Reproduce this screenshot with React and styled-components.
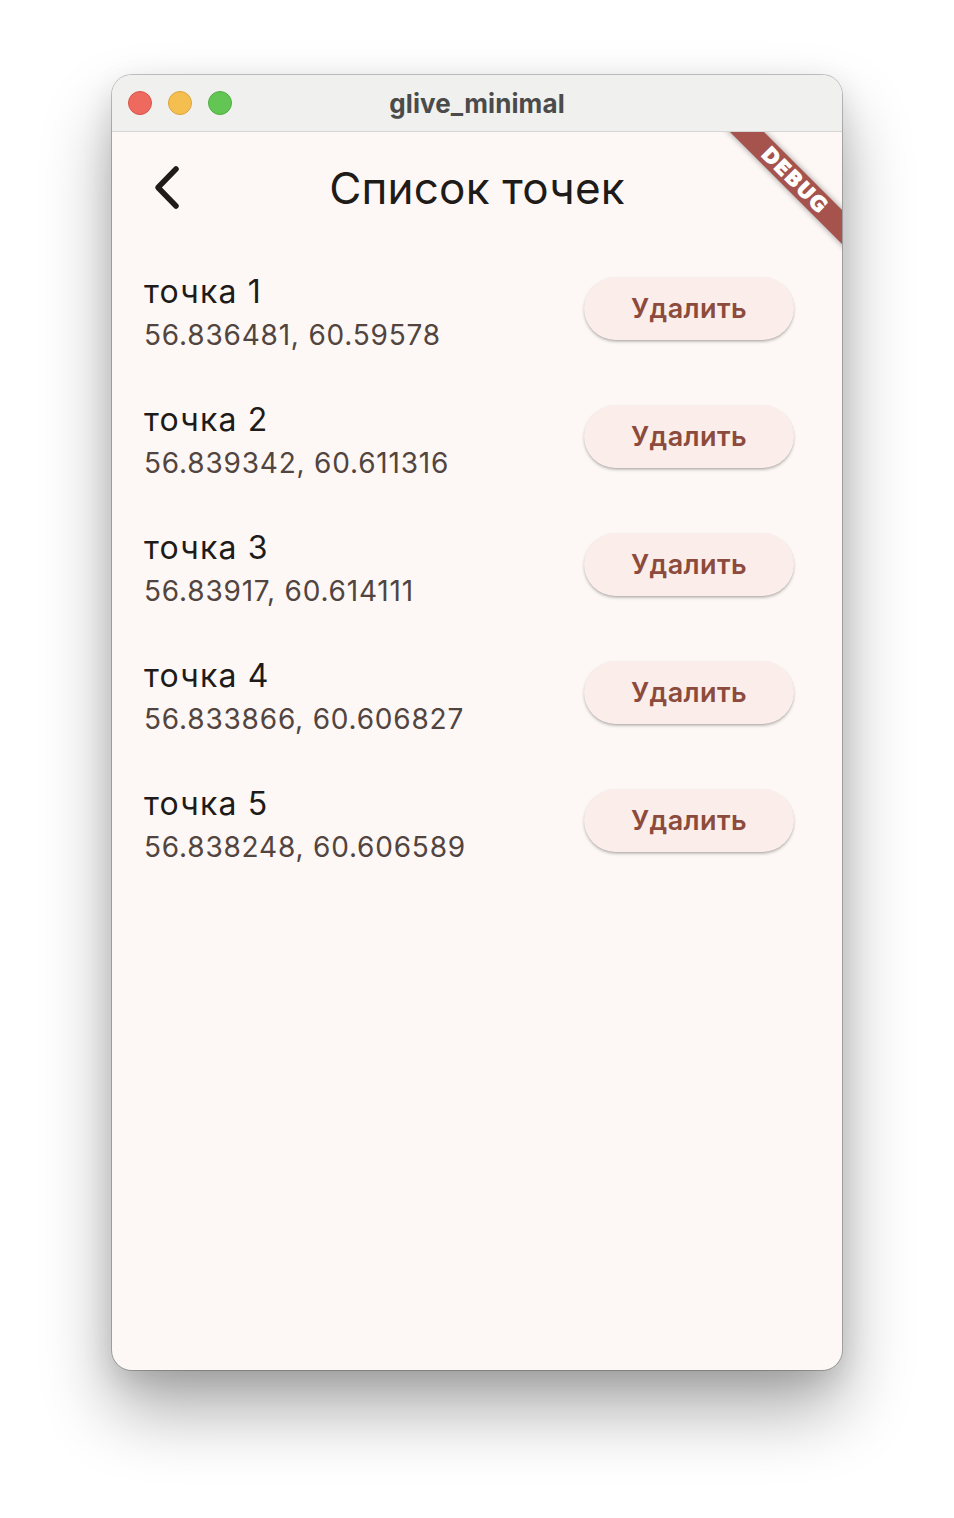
import React from "react";
import styled, { createGlobalStyle } from "styled-components";

const POINTS = [
  { name: "точка 1", coords: "56.836481, 60.59578" },
  { name: "точка 2", coords: "56.839342, 60.611316" },
  { name: "точка 3", coords: "56.83917, 60.614111" },
  { name: "точка 4", coords: "56.833866, 60.606827" },
  { name: "точка 5", coords: "56.838248, 60.606589" }
];

const GlobalStyle = createGlobalStyle`
  html, body {
    margin: 0;
    padding: 0;
    background: #ffffff;
  }
  body {
    font-family: Inter, "Noto Sans", "Liberation Sans", sans-serif;
    -webkit-font-smoothing: antialiased;
  }
`;

const Page = styled.div`
  width: 954px;
  height: 1518px;
  padding-top: 75px;
  box-sizing: border-box;
  display: flex;
  justify-content: center;
`;

const Window = styled.div`
  width: 730px;
  height: 1295px;
  border-radius: 20px;
  overflow: hidden;
  display: flex;
  flex-direction: column;
  background: #fdf8f5;
  box-shadow: 0 0 0 1px rgba(0, 0, 0, 0.22), 0 40px 70px rgba(0, 0, 0, 0.33),
    0 10px 30px rgba(0, 0, 0, 0.12);
`;

const TitleBar = styled.div`
  height: 56px;
  flex-shrink: 0;
  position: relative;
  display: flex;
  align-items: center;
  justify-content: center;
  background: #f0f0ef;
  border-bottom: 1px solid #d6d6d5;
`;

const Lights = styled.div`
  position: absolute;
  left: 16px;
  top: 16px;
  display: flex;
  gap: 16px;
`;

const Light = styled.span`
  width: 24px;
  height: 24px;
  border-radius: 50%;
  box-sizing: border-box;
  background: ${p => p.$fill};
  border: 1px solid ${p => p.$edge};
`;

const WindowTitle = styled.div`
  font-size: 26px;
  font-weight: 700;
  color: #4b4b4b;
  letter-spacing: 0.1px;
`;

const Content = styled.div`
  flex: 1;
  position: relative;
  overflow: hidden;
`;

const AppBar = styled.div`
  height: 112px;
  display: grid;
  grid-template-columns: 112px 1fr 112px;
  align-items: center;
`;

const BackButton = styled.div`
  display: flex;
  align-items: center;
  justify-content: center;
  height: 112px;
`;

const Title = styled.h1`
  margin: 0;
  text-align: center;
  font-size: 44px;
  font-weight: 400;
  letter-spacing: 0.2px;
  color: #1e1b19;
`;

const List = styled.div`
  display: flex;
  flex-direction: column;
`;

const Row = styled.div`
  height: 128px;
  box-sizing: border-box;
  padding: 6px 48px 0 32px;
  display: flex;
  align-items: center;
  justify-content: space-between;
`;

const Texts = styled.div`
  display: flex;
  flex-direction: column;
  margin-top: 2px;
`;

const Name = styled.div`
  font-size: 32px;
  line-height: 46px;
  letter-spacing: 1.2px;
  color: #1e1b19;
`;

const Coords = styled.div`
  font-size: 28px;
  line-height: 40px;
  letter-spacing: 0.8px;
  color: #52443f;
`;

const DeleteButton = styled.button`
  width: 210px;
  height: 63px;
  margin-top: -6px;
  border: none;
  border-radius: 32px;
  background: #fbeeea;
  color: #8c4b3c;
  font-family: inherit;
  font-size: 27px;
  font-weight: 600;
  letter-spacing: 0.4px;
  box-shadow: 0 2px 3px rgba(0, 0, 0, 0.22), 0 1px 1px rgba(0, 0, 0, 0.08);
  cursor: pointer;
`;

const Banner = styled.div`
  position: absolute;
  left: 583px;
  top: 36px;
  width: 200px;
  height: 24px;
  transform: rotate(45deg);
  background: #a6534d;
  box-shadow: 0 0 6px rgba(0, 0, 0, 0.4);
  display: flex;
  align-items: center;
  justify-content: center;
  color: #ffffff;
  font-family: "DejaVu Sans", "Liberation Sans", sans-serif;
  font-size: 20px;
  font-weight: 900;
  letter-spacing: 1.2px;
  -webkit-text-stroke: 1.1px #ffffff;
`;

const Chevron = () => (
  <svg width="40" height="48" viewBox="0 0 40 48">
    <path
      d="M28 5 L10 23.5 L28 42"
      fill="none"
      stroke="#1e1b19"
      strokeWidth="5.5"
      strokeLinecap="round"
      strokeLinejoin="round"
    />
  </svg>
);

const App = () => (
  <>
    <GlobalStyle />
    <Page>
      <Window>
        <TitleBar>
          <Lights>
            <Light $fill="#ee6a5f" $edge="#d9534a" />
            <Light $fill="#f5bf4f" $edge="#dca33a" />
            <Light $fill="#62c554" $edge="#4fae42" />
          </Lights>
          <WindowTitle>glive_minimal</WindowTitle>
        </TitleBar>
        <Content>
          <AppBar>
            <BackButton>
              <Chevron />
            </BackButton>
            <Title>Список точек</Title>
            <div />
          </AppBar>
          <List>
            {POINTS.map(p => (
              <Row key={p.name}>
                <Texts>
                  <Name>{p.name}</Name>
                  <Coords>{p.coords}</Coords>
                </Texts>
                <DeleteButton>Удалить</DeleteButton>
              </Row>
            ))}
          </List>
          <Banner>DEBUG</Banner>
        </Content>
      </Window>
    </Page>
  </>
);

export default App;
